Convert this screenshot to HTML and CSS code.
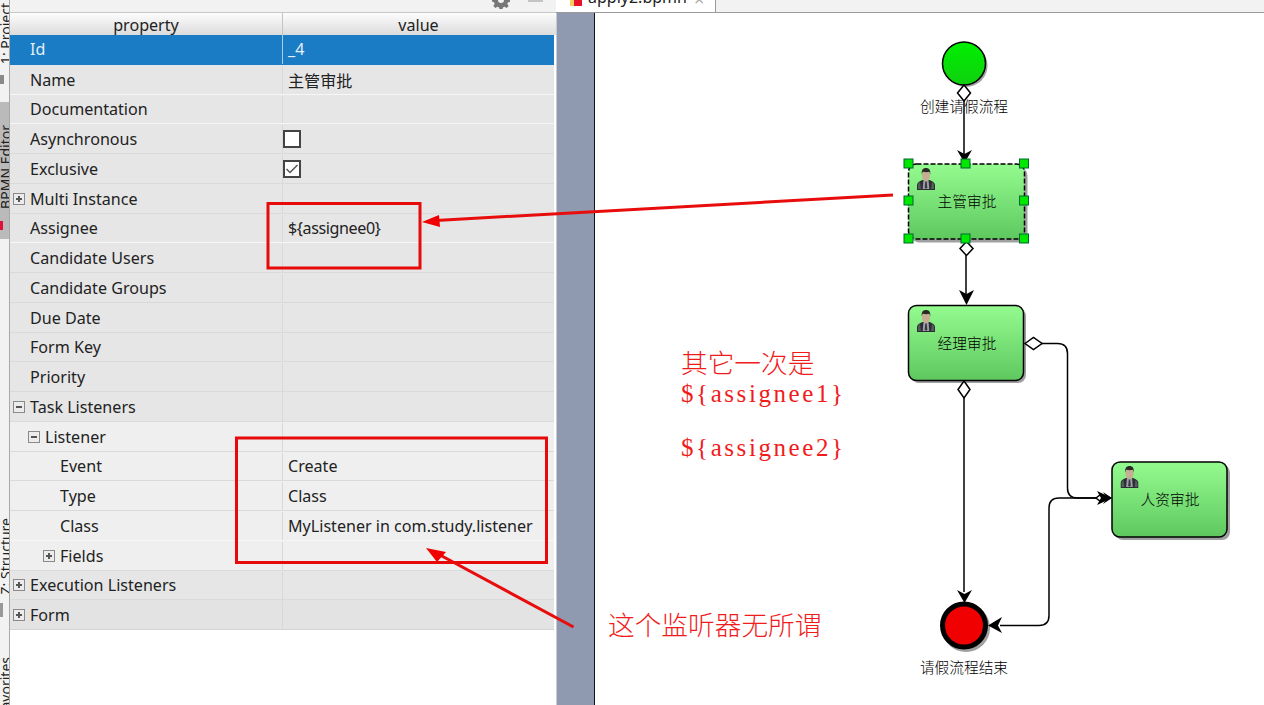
FILE: index.html
```html
<!DOCTYPE html>
<html lang="en">
<head>
    <meta charset="UTF-8">
    <title>apply2.bpmn</title>
    <link rel="stylesheet" href="styles.css">
</head>
<body>
    <div id="page">
        <div class="sidebar">
            <div class="side-item project"><span>1: Project</span></div>
            <div class="side-mark"></div>
            <div class="side-item active"><span>BPMN Editor</span><i class="side-red"></i></div>
            <div class="side-item structure"><span>Z: Structure</span></div>
            <div class="side-mark double"></div>
            <div class="side-item favorites"><span>Favorites</span></div>
        </div>

        <div class="panel">
            <div class="panel-tools">
                <svg class="gear" width="18" height="18" viewBox="0 0 18 18"><path d="M7.5 0h3l.4 2.4 1.7.7 2-1.4 2.100 2.100-1.400 2 .7 1.700 2.400.4v3l-2.400.4-.7 1.700 1.400 2-2.100 2.100-2-1.400-1.700.7-.4 2.400h-3l-.4-2.400-1.700-.7-2 1.400-2.100-2.100 1.400-2-.7-1.700L0 10.500v-3l2.400-.4.7-1.700-1.400-2 2.100-2.100 2 1.400 1.700-.7zM9 6a3 3 0 1 0 0 6 3 3 0 0 0 0-6z" fill="#777"/></svg>
                <i class="minimize"></i>
            </div>
            <div class="head">
                <div>property</div>
                <div>value</div>
            </div>
            <div class="rows">
                <div class="row selected"><div class="name">Id</div><div class="val">_4</div></div>
                <div class="row light"><div class="name">Name</div><div class="val">主管审批</div></div>
                <div class="row light"><div class="name">Documentation</div><div class="val"></div></div>
                <div class="row"><div class="name">Asynchronous</div><div class="val"><span class="check"></span></div></div>
                <div class="row"><div class="name">Exclusive</div><div class="val"><span class="check"><svg width="14" height="14" viewBox="0 0 14 14"><path d="M1.500 7l3.500 3.500 7.500-7.500" fill="none" stroke="#555" stroke-width="1.500"/></svg></span></div></div>
                <div class="row"><div class="name"><i class="toggle plus"></i>Multi Instance</div><div class="val"></div></div>
                <div class="row light"><div class="name">Assignee</div><div class="val tight">${assignee0}</div></div>
                <div class="row"><div class="name">Candidate Users</div><div class="val"></div></div>
                <div class="row"><div class="name">Candidate Groups</div><div class="val"></div></div>
                <div class="row"><div class="name">Due Date</div><div class="val"></div></div>
                <div class="row"><div class="name">Form Key</div><div class="val"></div></div>
                <div class="row"><div class="name">Priority</div><div class="val"></div></div>
                <div class="row"><div class="name"><i class="toggle"></i>Task Listeners</div><div class="val"></div></div>
                <div class="row nested"><div class="name lvl1"><i class="toggle"></i>Listener</div><div class="val"></div></div>
                <div class="row nested"><div class="name lvl2">Event</div><div class="val">Create</div></div>
                <div class="row nested"><div class="name lvl2">Type</div><div class="val">Class</div></div>
                <div class="row nested light"><div class="name lvl2">Class</div><div class="val">MyListener in com.study.listener</div></div>
                <div class="row nested"><div class="name lvl2"><i class="toggle plus"></i>Fields</div><div class="val"></div></div>
                <div class="row"><div class="name"><i class="toggle plus"></i>Execution Listeners</div><div class="val"></div></div>
                <div class="row last"><div class="name"><i class="toggle plus"></i>Form</div><div class="val"></div></div>
            </div>
        </div>

        <div class="main">
            <div class="tabs">
                <div class="tab">
                    <i class="tab-icon"></i>
                    <span class="tab-title">apply2.bpmn</span>
                    <span class="tab-close">×</span>
                </div>
            </div>
            <div class="workspace">
                <div class="palette"></div>
                <!-- viewBox uses the same numbers as the whole page -->
                <svg class="canvas" viewBox="595 13 669 692" width="669" height="692">
                    <defs>
                        <linearGradient id="taskFill" x1="0" y1="0" x2="0" y2="1">
                            <stop offset="0" stop-color="#94fb8f"/>
                            <stop offset="1" stop-color="#5ec85f"/>
                        </linearGradient>
                        <linearGradient id="startFill" x1="0" y1="0" x2="0" y2="1">
                            <stop offset="0" stop-color="#00f000"/>
                            <stop offset="1" stop-color="#10d010"/>
                        </linearGradient>
                        <symbol id="person" viewBox="0 0 18 22">
                            <path d="M0 22v-5c0-2.500 2-3.500 5.500-5h7c3.500 1.500 5.500 2.500 5.500 5v5z" fill="#2b2f32"/>
                            <path d="M1 21v-4c0-1.500 1-2.400 2-3l1 7zM17 21v-4c0-1.500-1-2.400-2-3l-1 7z" fill="#555a5c"/>
                            <path d="M6.500 11.500h5l.8 9.500H5.700z" fill="#a09ea6"/>
                            <path d="M8.300 13.500h1.400l.6 6-1.300 1.500-1.300-1.500z" fill="#3a3a42"/>
                            <ellipse cx="9" cy="7.500" rx="4" ry="5.500" fill="#c6ad93"/>
                            <path d="M4.800 6.500C4.200 2 6 0 9 0s4.800 2 4.200 6.500l-.8-2.700c-2 .5-4 .5-6.800 0z" fill="#2c2a26"/>
                        </symbol>
                    </defs>

                    <path class="wire" d="M964 100V154"/>
                    <path class="wire" d="M966 254V296"/>
                    <path class="wire" d="M964 397V592"/>
                    <path class="wire" d="M1041 343.500H1057.500Q1067.500 343.500 1067.500 353.500V488Q1067.500 498 1077.500 498H1100"/>
                    <path class="wire" d="M1000 625.500H1039Q1049 625.500 1049 615.500V508Q1049 498 1059 498H1100"/>

                    <circle class="shadow" cx="966" cy="65.500" r="21.500"/>
                    <circle cx="964" cy="63.500" r="21.500" fill="url(#startFill)" stroke="#000" stroke-width="1.500"/>

                    <rect class="shadow" x="911.500" y="167.500" width="116" height="75" rx="8"/>
                    <rect x="908.500" y="164" width="116" height="75" rx="8" fill="url(#taskFill)" stroke="#000" stroke-width="1.500" stroke-dasharray="5 2"/>
                    <rect class="shadow" x="911" y="308" width="115" height="75" rx="8"/>
                    <rect class="task" x="908.500" y="305.500" width="115" height="75" rx="8"/>
                    <rect class="shadow" x="1115" y="465" width="115" height="75" rx="8"/>
                    <rect class="task" x="1112" y="462" width="115" height="75" rx="8"/>

                    <circle class="shadow" cx="966" cy="628" r="24"/>
                    <circle cx="964" cy="625.500" r="21.500" fill="#f00000" stroke="#000" stroke-width="5"/>

                    <path class="diamond" d="M964 85L970.500 93 964 101 957.500 93z"/>
                    <path class="diamond" d="M966.500 241.500L973 248.500 966.500 255.500 960 248.500z"/>
                    <path class="diamond" d="M964 381L970 389.500 964 398 958 389.500z"/>
                    <path class="diamond" d="M1025 343.500L1033.500 337.500 1042 343.500 1033.500 349.500z"/>
                    <path class="diamond" d="M1096 498L1100 495 1104 498 1100 501z"/>

                    <path d="M957 150L964.500 154 972 150 964.500 163z"/>
                    <path d="M959 290L966.500 294 974 290 966.500 305z"/>
                    <path d="M957 590L964.500 594 972 590 964.500 603z"/>
                    <path d="M1097 491L1101 498 1097 505 1112 498z"/>
                    <path d="M1103 492L1107 498 1103 504 1112 498z"/>
                    <path d="M1002 617L998 625.500 1002 633 988 625.500z"/>

                    <use href="#person" x="917" y="168" width="18" height="22"/>
                    <use href="#person" x="917" y="310" width="18" height="22"/>
                    <use href="#person" x="1120.500" y="466" width="18" height="22"/>

                    <text class="label" x="964" y="112">创建请假流程</text>
                    <text class="label" x="967" y="207">主管审批</text>
                    <text class="label" x="967" y="349">经理审批</text>
                    <text class="label" x="1170" y="505">人资审批</text>
                    <text class="label" x="964" y="673">请假流程结束</text>

                    <rect class="handle" x="904" y="159" width="9" height="9"/>
                    <rect class="handle" x="961" y="159" width="9" height="9"/>
                    <rect class="handle" x="1019.500" y="159" width="9" height="9"/>
                    <rect class="handle" x="904" y="196" width="9" height="9"/>
                    <rect class="handle" x="1019.500" y="196" width="9" height="9"/>
                    <rect class="handle" x="904" y="234" width="9" height="9"/>
                    <rect class="handle" x="961" y="234" width="9" height="9"/>
                    <rect class="handle" x="1019.500" y="234" width="9" height="9"/>
                </svg>
            </div>
        </div>

        <!-- red notes drawn on top of the screenshot -->
        <svg class="notes" viewBox="0 0 1264 705" width="1264" height="705">
            <rect class="note-box" x="268" y="203.500" width="152" height="64.500"/>
            <rect class="note-box" x="236.500" y="438" width="310" height="124.500"/>
            <path class="note-line" d="M893 195L436 220.500"/>
            <path class="note-head" d="M422 222L439 215 440 227z"/>
            <path class="note-line" d="M573.500 627L440 555"/>
            <path class="note-head" d="M426 548L446 552 437 562z"/>
            <text class="note-text" x="681" y="373">其它一次是</text>
            <text class="note-code" x="681" y="402" textLength="162">${assignee1}</text>
            <text class="note-code" x="681" y="456" textLength="162">${assignee2}</text>
            <text class="note-text" x="608" y="635">这个监听器无所谓</text>
        </svg>
    </div>
</body>
</html>
```
FILE: styles.css
```css
* {
    box-sizing: border-box;
}
body {
    margin: 0;
    overflow: hidden;
    background-color: #fff;
    font-family: "Noto Sans", "Noto Sans CJK SC", sans-serif;
    font-size: 16.1px;
    color: #222;
}
#page {
    position: relative;
    display: flex;
    width: 1264px;
    height: 705px;
    overflow: hidden;
}

/* tool window strip */
.sidebar {
    width: 10px;
    flex: none;
    display: flex;
    flex-direction: column;
    overflow: hidden;
    background-color: #f2f2f2;
    border-right: 1px solid #a8a8a8;
}
.side-item {
    display: flex;
    flex-direction: column;
    flex: none;
    width: 9px;
    overflow: hidden;
    font-size: 14px;
    color: #222;
}
.side-item span {
    writing-mode: vertical-rl;
    transform: rotate(180deg);
    width: 19px;
    line-height: 19px;
    margin-left: -4px;
    white-space: nowrap;
}
.side-item.project {
    height: 75px;
    justify-content: flex-end;
    padding-bottom: 11px;
}
.side-mark {
    width: 4px;
    height: 9px;
    background-color: #8a8a8a;
    flex: none;
}
.side-mark.double {
    margin-top: 7px;
    height: 14px;
    width: 3px;
    background-color: #999;
}
.side-item.active {
    height: 137px;
    margin-top: 18px;
    padding-top: 23px;
    background-color: #bababa;
}
.side-red {
    display: block;
    width: 3px;
    height: 9px;
    margin-top: 12px;
    background-color: #e0103c;
}
.side-item.structure {
    height: 78px;
    margin-top: 279px;
}
.side-item.favorites {
    height: 60px;
    margin-top: 40px;
}

/* property panel */
.panel {
    width: 546px;
    flex: none;
    display: flex;
    flex-direction: column;
}
.panel-tools {
    height: 13px;
    position: relative;
    overflow: hidden;
    background-color: #f2f2f2;
    border-bottom: 1px solid #c8c8c8;
}
.gear {
    position: absolute;
    left: 482px;
    top: -9px;
}
.minimize {
    position: absolute;
    left: 518px;
    top: 0;
    width: 15px;
    height: 2px;
    background-color: #c4c4c4;
}
.head {
    height: 22px;
    display: grid;
    grid-template-columns: 272px 272px;
    background: linear-gradient(#fdfdfd, #dcdcdc);
    line-height: 24px;
    text-align: center;
}
.head div + div {
    border-left: 1px solid #c4c4c4;
}
.rows {
    height: 595px;
    display: grid;
    grid-template-rows: repeat(20, 1fr);
    width: 544px;
}
.row {
    display: grid;
    grid-template-columns: 272px 272px;
    padding-top: 1px;
    background-color: #e6e6e6;
    border-bottom: 1px solid #dadada;
}
.row.light {
    border-bottom-color: #f6f6f6;
}
.row.nested {
    background-color: #efefef;
}
.row.last {
    background-color: #e3e3e3;
    border-bottom-color: #d4d4d4;
}
.row.selected {
    padding-top: 0;
    padding-bottom: 1px;
    background-color: #1a7cc4;
    border-bottom: none;
    color: #e4eff8;
}
.name {
    display: flex;
    align-items: center;
    padding-left: 20px;
}
.name.lvl1 {
    padding-left: 35px;
}
.name.lvl2 {
    padding-left: 50px;
}
.val {
    display: flex;
    align-items: center;
    padding-left: 5px;
    border-left: 1px solid #d8d8d8;
}
.val.tight {
    letter-spacing: -0.4px;
}
.selected .val {
    border-left-color: #a8cfe9;
}
.toggle {
    position: relative;
    flex: none;
    width: 12px;
    height: 12px;
    margin-left: -17px;
    margin-right: 5px;
    border: 1px solid #8a8a8a;
    background-color: #ececec;
}
.toggle::before {
    content: "";
    position: absolute;
    left: 2px;
    top: 4px;
    width: 6px;
    height: 2px;
    background-color: #555;
}
.toggle.plus::after {
    content: "";
    position: absolute;
    left: 4px;
    top: 2px;
    width: 2px;
    height: 6px;
    background-color: #555;
}
.check {
    display: flex;
    align-items: center;
    justify-content: center;
    width: 18px;
    height: 18px;
    margin-left: -5px;
    border: 2px solid #444;
    background-color: #fff;
}

/* editor */
.main {
    flex: 1;
    display: flex;
    flex-direction: column;
    min-width: 0;
}
.tabs {
    height: 13px;
    flex: none;
    background-color: #f2f2f2;
    border-bottom: 1px solid #9a9a9a;
}
.tab {
    position: relative;
    width: 160px;
    height: 12px;
    overflow: hidden;
    background-color: #fff;
    border-right: 1px solid #9a9a9a;
}
.tab-icon {
    position: absolute;
    left: 14px;
    top: 0;
    width: 12px;
    height: 6px;
    background: linear-gradient(90deg, #f0d060 4px, #e8102a 4px);
}
.tab-title {
    position: absolute;
    left: 32px;
    top: -14px;
    font-size: 16px;
    line-height: 22px;
}
.tab-close {
    position: absolute;
    left: 138px;
    top: -12px;
    color: #aaa;
    font-size: 18px;
    line-height: 22px;
}
.workspace {
    flex: 1;
    display: flex;
    min-height: 0;
}
.palette {
    width: 39px;
    flex: none;
    background-color: #8f99b0;
    border-left: 1px solid #c4ccdc;
    border-right: 1px solid #10131c;
}
.canvas {
    flex: none;
    display: block;
    background-color: #fff;
}
.wire {
    fill: none;
    stroke: #000;
    stroke-width: 1.5;
}
.shadow {
    fill: #777;
    opacity: 0.7;
}
.task {
    fill: url(#taskFill);
    stroke: #000;
    stroke-width: 1.5;
}
.diamond {
    fill: #fff;
    stroke: #000;
    stroke-width: 1.5;
}
.handle {
    fill: #00e800;
    stroke: #063;
    stroke-width: 1;
}
.label {
    font-family: "Noto Sans CJK SC", sans-serif;
    font-size: 14.7px;
    font-weight: 300;
    text-anchor: middle;
    fill: #000;
}

/* annotations */
.notes {
    position: absolute;
    left: 0;
    top: 0;
    pointer-events: none;
}
.note-box {
    fill: none;
    stroke: #e60a0a;
    stroke-width: 3;
}
.note-line {
    fill: none;
    stroke: #e80c0c;
    stroke-width: 3;
}
.note-head {
    fill: #f00000;
}
.note-text {
    font-family: "Noto Sans CJK SC", sans-serif;
    font-size: 26.7px;
    font-weight: 300;
    fill: #f01c1c;
}
.note-code {
    font-family: "Liberation Serif", serif;
    font-size: 25px;
    fill: #f01c1c;
}
```
